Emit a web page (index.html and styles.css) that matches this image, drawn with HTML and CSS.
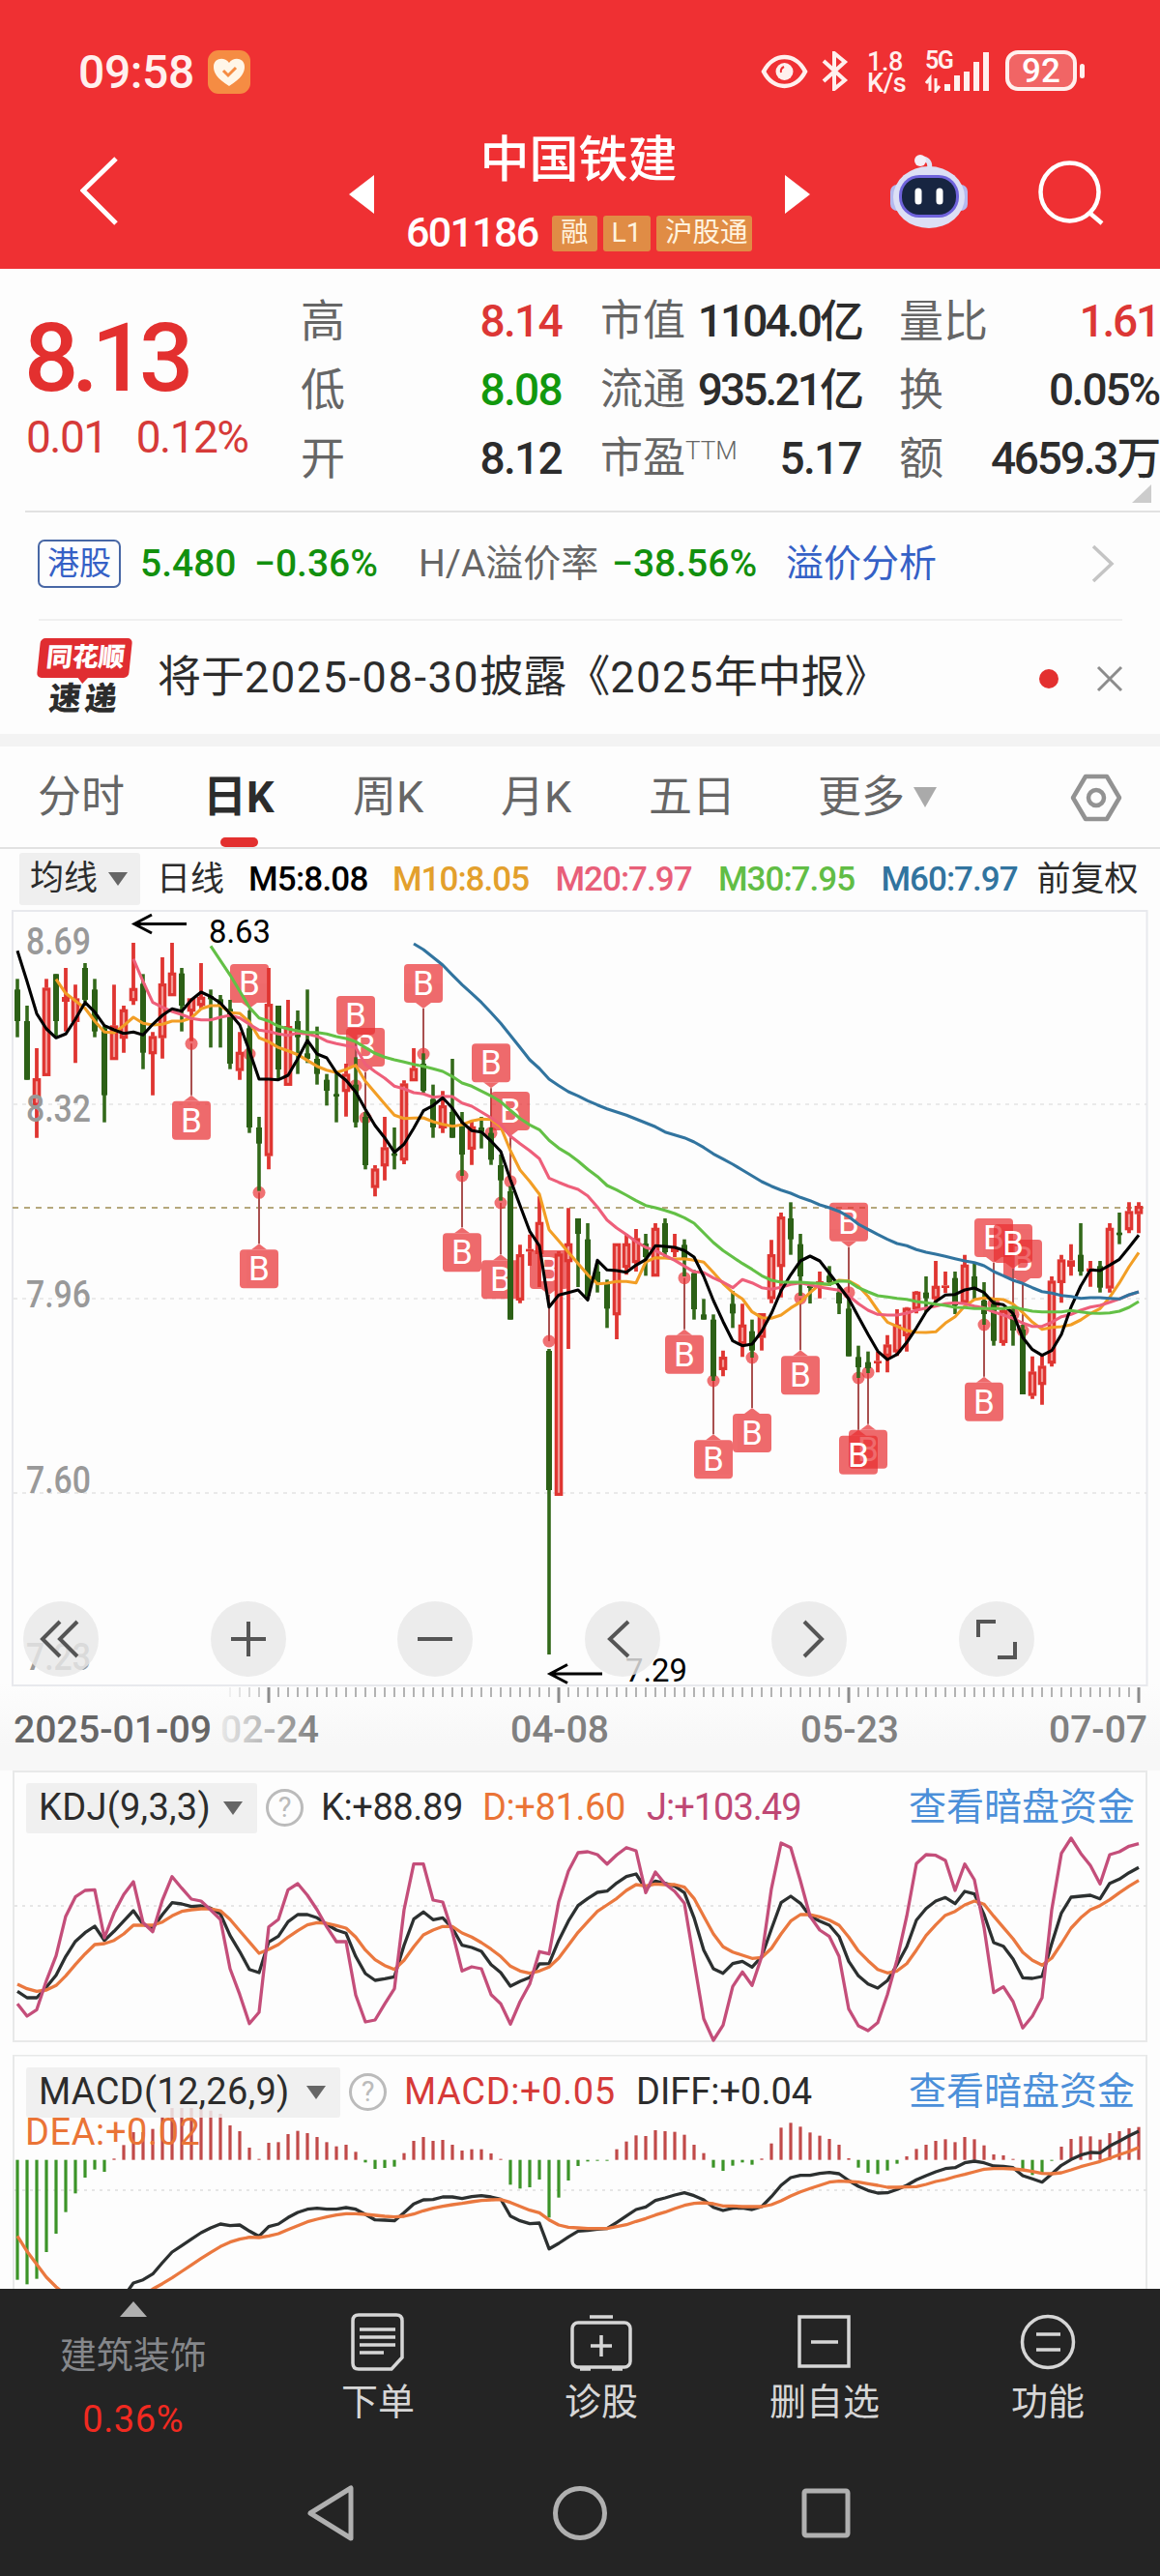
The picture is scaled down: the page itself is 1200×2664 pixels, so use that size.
FILE: index.html
```html
<!DOCTYPE html>
<html lang="zh-CN">
<head>
<meta charset="utf-8">
<title>中国铁建 601186</title>
<link rel="stylesheet" href="styles.css">
</head>
<body>
<header class="top">
  <div class="status">
    <span class="clock">09:58</span>
    <svg class="heart" width="44" height="45" viewBox="0 0 44 45"><rect width="44" height="45" rx="11" fill="#f58c43"/><path d="M22 37C9 29 6 23 6 17c0-9 11-11 16-4 5-7 16-5 16 4 0 6-3 12-16 20z" fill="#fff6e8"/><path d="M16 21l5 5 8-8" fill="none" stroke="#f58c43" stroke-width="3"/></svg>
    <svg class="eye" width="49" height="36" viewBox="0 0 49 36"><path d="M3 18C13-2 36-2 46 18 36 38 13 38 3 18z" fill="none" stroke="#fff0ee" stroke-width="4.5"/><circle cx="24.500" cy="18" r="9" fill="#fff0ee"/><path d="M24 13q-4 2-3 6" fill="none" stroke="#ef3033" stroke-width="2"/></svg>
    <svg class="bt" width="28" height="41" viewBox="0 0 28 41"><path d="M2 10l22 20-11 9V2l11 9L2 31" fill="none" stroke="#fff0ee" stroke-width="4"/></svg>
    <span class="net"><span>1.8</span><span>K/s</span></span>
    <span class="cell"><span class="fiveg">5G</span>
    <svg width="68" height="44" viewBox="0 0 68 44"><path d="M5 42V29l-4 5M11 29v13l4-5" fill="none" stroke="#fff0ee" stroke-width="3"/><path d="M23 42V35M33 42V26M43 42V22M53 42V12M63 42V2" stroke="#fff0ee" stroke-width="6"/></svg></span>
    <span class="battery">92</span><i class="knob"></i>
  </div>
  <div class="titlebar">
    <svg class="back" width="40" height="72" viewBox="0 0 40 72"><path d="M37 2L3 35l34 34" fill="none" stroke="#fff" stroke-width="5"/></svg>
    <svg class="prev" width="26" height="40" viewBox="0 0 26 40"><path d="M26 0v40L0 20z" fill="#fff"/></svg>
    <div class="name">
      <h1>中国铁建</h1>
      <div class="codeline"><span class="code">601186</span><b>融</b><b class="l1">L1</b><b>沪股通</b></div>
    </div>
    <svg class="next" width="26" height="40" viewBox="0 0 26 40"><path d="M0 0v40l26-20z" fill="#fff"/></svg>
    <svg class="robot" width="80" height="76" viewBox="0 0 80 76"><path d="M40 16q3-10-6-12" fill="none" stroke="#dfe2f5" stroke-width="5"/><circle cx="31" cy="6" r="6" fill="#f5eef8"/><rect x="0" y="31" width="14" height="27" rx="7" fill="#b4b9ee"/><rect x="66" y="31" width="14" height="27" rx="7" fill="#b4b9ee"/><ellipse cx="40" cy="44" rx="37" ry="32" fill="#dcdff5"/><rect x="9" y="21" width="62" height="44" rx="21" fill="#6f63dc"/><rect x="12" y="24" width="56" height="38" rx="18" fill="#172541"/><path d="M29 38v10M51 38v10" stroke="#fff" stroke-width="7" stroke-linecap="round"/></svg>
    <svg class="search" width="68" height="68" viewBox="0 0 68 68"><circle cx="32.500" cy="32.500" r="30" fill="none" stroke="#fff" stroke-width="4.500"/><path d="M53 54l13 11" stroke="#fff" stroke-width="4.500"/></svg>
  </div>
</header>

<section class="quote">
  <div class="last"><strong>8.13</strong><span class="chg"><span>0.01</span><span>0.12%</span></span></div>
  <dl class="c1"><div><dt>高</dt><dd class="up">8.14</dd></div><div><dt>低</dt><dd class="down">8.08</dd></div><div><dt>开</dt><dd>8.12</dd></div></dl>
  <dl class="c2"><div><dt>市值</dt><dd>1104.0亿</dd></div><div><dt>流通</dt><dd>935.21亿</dd></div><div><dt>市盈<sup>TTM</sup></dt><dd>5.17</dd></div></dl>
  <dl class="c3"><div><dt>量比</dt><dd class="up">1.61</dd></div><div><dt>换</dt><dd>0.05%</dd></div><div><dt>额</dt><dd>4659.3万</dd></div></dl>
  <i class="corner"></i>
</section>

<section class="hk">
  <span class="hkbadge">港股</span><span class="hkprice">5.480</span><span class="hkchg">−0.36%</span>
  <span class="halabel">H/A溢价率</span><span class="harate">−38.56%</span><span class="halink">溢价分析</span>
  <svg class="chev" width="24" height="40" viewBox="0 0 24 40"><path d="M2 2l19 18L2 38" fill="none" stroke="#c4c4c4" stroke-width="3.500"/></svg>
</section>

<section class="news">
  <div class="brand"><span class="brandtop">同花顺</span><span class="brandbot">速递</span></div>
  <span class="headline">将于<span class="num">2025-08-30</span>披露《<span class="num">2025</span>年中报》</span>
  <i class="dot"></i>
  <svg class="close" width="28" height="28" viewBox="0 0 28 28"><path d="M2 2l24 24M26 2L2 26" stroke="#8c8c8c" stroke-width="3"/></svg>
</section>
<div class="band"></div>

<nav class="tabs">
  <span>分时</span><span class="on">日K</span><span>周K</span><span>月K</span><span>五日</span><span class="more">更多<i></i></span>
  <svg width="54" height="50" viewBox="0 0 54 50"><path d="M16 3h22l13 22-13 22H16L3 25z" fill="none" stroke="#929292" stroke-width="4.500" stroke-linejoin="round"/><circle cx="27" cy="25" r="8" fill="none" stroke="#929292" stroke-width="4.500"/></svg>
</nav>

<div class="mabar">
  <span class="pick">均线<i></i></span><span class="day">日线</span>
  <span class="m5">M5:8.08</span><span class="m10">M10:8.05</span><span class="m20">M20:7.97</span><span class="m30">M30:7.95</span><span class="m60">M60:7.97</span>
  <span class="adj">前复权</span>
</div>

<div class="kchart">
  <svg id="kline" width="1200" height="895" viewBox="0 936 1200 895"></svg>
  <div class="tools">
    <svg viewBox="0 0 78 78"><path d="M38 21L20 39l18 18M56 21L38 39l18 18"/></svg>
    <svg viewBox="0 0 78 78"><path d="M39 21v36M21 39h36"/></svg>
    <svg viewBox="0 0 78 78"><path d="M21 39h36"/></svg>
    <svg viewBox="0 0 78 78"><path d="M45 21L26 39l19 18"/></svg>
    <svg viewBox="0 0 78 78"><path d="M34 21l18 18-18 18"/></svg>
    <svg viewBox="0 0 78 78"><path d="M20 37V21h18M58 42v16H40"/></svg>
  </div>
</div>

<section class="panel kdj">
  <svg id="kdj" width="1200" height="294" viewBox="0 1831 1200 294"></svg>
  <div class="legend"><span class="pick">KDJ(9,3,3)<i></i></span><em>?</em><span class="k">K:+88.89</span><span class="d">D:+81.60</span><span class="j">J:+103.49</span><a>查看暗盘资金</a></div>
</section>
<section class="panel macd">
  <svg id="macd" width="1200" height="245" viewBox="0 2125 1200 245"></svg>
  <div class="legend"><span class="pick">MACD(12,26,9)<i></i></span><em>?</em><span class="m">MACD:+0.05</span><span class="f">DIFF:+0.04</span><a>查看暗盘资金</a></div>
  <div class="dea">DEA:+0.02</div>
</section>

<footer>
  <div class="actions">
    <div class="sector"><i></i><span>建筑装饰</span><b>0.36%</b></div>
    <div><svg width="60" height="60" viewBox="0 0 60 60"><path d="M10 2h39q6 0 6 6v38L44 58H10q-6 0-6-6V8q0-6 6-6z"/><path d="M11 17h37M11 25h37M11 33h37M11 41h25"/></svg><span>下单</span></div>
    <div><svg width="66" height="60" viewBox="0 0 66 60"><rect x="3" y="10" width="60" height="46" rx="6"/><path d="M21 4h24M33 23v22M22 34h22M11 58h11M44 58h11"/></svg><span>诊股</span></div>
    <div><svg width="60" height="60" viewBox="0 0 60 60"><path d="M4 4h51v51H4zM16 30h28"/></svg><span>删自选</span></div>
    <div><svg width="60" height="60" viewBox="0 0 60 60"><circle cx="30" cy="30" r="26.500"/><path d="M18 22h25M18 38h25"/></svg><span>功能</span></div>
  </div>
  <div class="sysnav">
    <svg width="52" height="60" viewBox="0 0 52 60"><path d="M46 4v52L4 30z" stroke-linejoin="round"/></svg>
    <svg width="58" height="60" viewBox="0 0 58 60"><circle cx="29" cy="30" r="25.500"/></svg>
    <svg width="52" height="60" viewBox="0 0 52 60"><rect x="3" y="7" width="45" height="46" rx="2"/></svg>
  </div>
</footer>
<script src="charts.js"></script>
</body>
</html>
```
FILE: styles.css
```css
* { box-sizing: border-box; }
body { margin: 0; width: 1200px; background: #fdfdfd; color: #2c2c2c; font-family: Roboto, "Noto Sans CJK SC", sans-serif; font-stretch: 88%; white-space: nowrap; overflow-x: hidden; }
i, em { font-style: normal; }
svg { display: block; flex: none; }

.top { height: 278px; background: #ef3033; color: #fff; }
.status { height: 140px; padding: 52px 0 0 81px; display: flex; align-items: flex-start; }
.clock { font-size: 48px; line-height: 46px; width: 134px; font-weight: 500; letter-spacing: -.4px; color: #fff0ee; }
.heart { margin-right: 528px; }
.eye { margin: 4px 14px 0 0; }
.bt { margin: 1px 19px 0 0; }
.net { display: flex; flex-direction: column; width: 60px; padding-top: 1px; font-size: 27px; line-height: 22px; font-weight: 500; letter-spacing: -.4px; color: #fff0ee; }
.cell { position: relative; margin-right: 15px; }
.fiveg { position: absolute; left: 0; top: 0; font-size: 25px; line-height: 22px; font-weight: 600; letter-spacing: -1.500px; color: #fff0ee; }
.battery { width: 74px; height: 42px; border: 4px solid #fff0ee; border-radius: 13px; background: #f16565; font-size: 35px; line-height: 35px; font-weight: 500; text-align: center; }
.knob { width: 5px; height: 15px; margin: 14px 0 0 3px; border-radius: 3px; background: #fff0ee; }
.titlebar { height: 138px; display: flex; padding-left: 83px; }
.back { margin: 22px 238px 0 0; }
.prev, .next { margin-top: 41px; }
.name { width: 425px; }
.name h1 { margin: -3px 0 0; padding-right: 2px; text-align: center; font-size: 51px; line-height: 58px; font-weight: 500; }
.codeline { display: flex; padding: 28px 0 0 33px; gap: 6px; }
.code { font-size: 43px; line-height: 35px; width: 145px; letter-spacing: -1.700px; font-weight: 500; }
.codeline b { height: 37px; line-height: 36px; border-radius: 3px; background: #e08c45; padding: 0 9px; font-size: 28.500px; font-weight: 400; color: #fff3df; }
.codeline b:last-child { padding: 0 5px 0 9px; }
.robot { margin: 20px 73px 0 83px; }
.search { margin-top: 26px; }

.quote { position: relative; height: 252px; padding-left: 28px; display: flex; }
.quote::after { content: ""; position: absolute; left: 26px; right: 0; bottom: 0; height: 2px; background: #e2e2e2; }
.last { width: 283px; color: #e3302f; }
.last strong { display: block; margin: 40px 0 0 -3px; font-size: 99px; line-height: 104px; font-weight: 500; letter-spacing: -7px; }
.chg { display: flex; gap: 30px; margin: 7px 0 0 -1px; font-size: 46px; line-height: 46px; letter-spacing: -1.500px; color: #d63a38; }
dl { margin: 18px 0 0; }
dl > div { height: 71px; display: flex; align-items: center; justify-content: space-between; }
dt { font-size: 46px; line-height: 60px; color: #666; font-weight: 400; }
dd { margin: 0; font-size: 46px; line-height: 60px; font-weight: 500; text-align: right; letter-spacing: -1.700px; }
.c1 { width: 270px; margin-right: 40px; }
.c2 { width: 270px; margin-right: 39px; }
.c2 dd { letter-spacing: -2.900px; }
.c2 div:last-child dd { letter-spacing: -1.700px; }
.c3 { width: 269px; }
.c3 dd { font-weight: 500; letter-spacing: -2.200px; }
sup { font-size: 26px; line-height: 0; vertical-align: 14px; font-weight: 300; }
.c2 dt { font-size: 44px; }
.up { color: #dc3735; }
.down { color: #12980e; }
.corner { position: absolute; right: 9px; bottom: 10px; border: solid transparent; border-width: 0 0 19px 20px; border-bottom-color: #ccc; }

.hk { position: relative; height: 112px; padding: 28px 0 0 39px; display: flex; align-items: flex-start; }
.hk::after { content: ""; position: absolute; left: 40px; right: 39px; bottom: 0; height: 2px; background: #f0f0f0; }
.hk span { line-height: 50px; font-size: 39px; }
.hk .hkbadge { width: 86px; height: 50px; line-height: 45px; font-size: 33px; border: 2px solid #4867a5; border-radius: 7px; text-align: center; color: #3561c6; margin-right: 20px; }
.hkprice { width: 118px; } .hkchg { width: 170px; } .hkprice, .hkchg, .harate { color: #12900e; font-weight: 500; }
.halabel { width: 200px; color: #666; }
.harate { width: 180px; } .halink { color: #3561c6; width: 316px; }
.chev { margin-top: 5px; }

.news { height: 117px; display: flex; padding: 18px 0 0 40px; }
.brand { width: 123px; font-weight: 900; line-height: 1; }
.brandtop { display: block; position: relative; width: 95px; height: 41px; padding: 7px 0 0 8px; background: #e02d31; color: #fff; font-size: 27px; border-radius: 5px; transform: skewX(-6deg); }
.brandtop::after { content: ""; position: absolute; left: 42px; top: 40px; border: solid transparent; border-width: 7px 6px 0; border-top-color: #e02d31; }
.brandbot { display: block; margin: 5px 0 0 11px; font-size: 33px; letter-spacing: 4px; transform: skewX(-6deg); transform-origin: left; }
.headline { width: 912px; font-size: 45px; line-height: 82px; }
.num { letter-spacing: 1.600px; }
.dot { width: 20px; height: 20px; margin: 32px 39px 0 0; border-radius: 50%; background: #e3302f; }
.close { margin-top: 28px; }
.band { height: 13px; background: #f3f3f3; }

.tabs { height: 106px; border-bottom: 2px solid #e2e2e2; display: flex; padding-left: 39px; font-size: 45px; line-height: 106px; color: #666; }
.tabs span:nth-child(1) { width: 171px; }
.tabs span:nth-child(2) { width: 155px; }
.tabs span:nth-child(3) { width: 153px; }
.tabs span:nth-child(4) { width: 153px; }
.tabs span:nth-child(5) { width: 175px; }
.tabs .on { position: relative; color: #2c2c2c; font-weight: 700; }
.on::after { content: ""; position: absolute; left: 18px; bottom: 0; width: 39px; height: 10px; border-radius: 5px; background: #e3302f; }
.tabs .more { display: flex; width: 261px; }
.more i { margin: 42px 0 0 9px; border: solid transparent; border-width: 21px 12px 0; border-top-color: #aaa; height: 0; }
.tabs svg { margin-top: 28px; }

.mabar { height: 58px; display: flex; padding: 4px 0 0 20px; font-size: 35px; line-height: 56px; }
.pick { display: flex; align-items: center; background: #efefef; border-radius: 3px; }
.pick i { border: solid transparent; border-width: 14px 10px 0; border-top-color: #666; }
.mabar .pick { width: 125px; padding-left: 11px; gap: 11px; margin-right: 17px; }
.day { width: 95px; }
.m5, .m10, .m20, .m30, .m60 { font-weight: 500; letter-spacing: -1px; }
.m5 { width: 149px; color: #000; letter-spacing: -.8px; } .m10, .m20, .m30 { width: 168.500px; } .m10 { color: #e3a02c; } .m20 { color: #e85f79; } .m30 { color: #61bd45; } .m60 { width: 161px; color: #31749f; }

.kchart { position: relative; height: 895px; background: linear-gradient(#fdfdfd 805px, #f7f7f7 870px); }
.tools { position: absolute; left: 24px; top: 720px; display: flex; gap: 115.500px; }
.tools svg { width: 78px; height: 78px; border-radius: 50%; background: rgba(232,232,232,.82); fill: none; stroke: #555; stroke-width: 4px; }
svg text { font-family: Roboto, "Noto Sans CJK SC", sans-serif; }

.panel { position: relative; }
.kdj { height: 294px; }
.macd { height: 242px; overflow: hidden; }
.legend { position: absolute; left: 27px; top: 12px; width: 1147px; display: flex; font-size: 38px; line-height: 53px; align-items: center; }
.legend .pick { height: 52px; padding-left: 13px; background: rgba(237,237,237,.85); justify-content: space-between; padding-right: 15px; width: 239px; margin-right: 9px; letter-spacing: .3px; }
.macd .legend .pick { width: 325px; }
.legend em { width: 39px; height: 39px; border: 3px solid #bbb; border-radius: 50%; font-size: 29px; line-height: 33px; text-align: center; color: #bbb; margin-right: 18px; }
.k, .d, .j { letter-spacing: -.4px; }
.k { width: 167px; } .d { width: 170px; color: #ea7436; } .j { color: #bf4874; letter-spacing: -1px; } .m { width: 240px; color: #d63a38; letter-spacing: .6px; }
.legend a { margin-left: auto; font-size: 39px; color: #4b8fd9; }
.dea { position: absolute; left: 26px; top: 57px; font-size: 38px; line-height: 46px; letter-spacing: .6px; color: #ea7436; }

footer { height: 297px; background: #242424; color: #d6d6d6; }
.actions { display: flex; height: 165px; padding-top: 24px; }
.actions > div { width: 231px; display: flex; flex-direction: column; align-items: center; font-size: 38px; line-height: 48px; }
.actions > div > span { margin-top: 8px; }
.actions svg { fill: none; stroke: #d6d6d6; stroke-width: 3.500px; height: 60px; margin-top: 1px; }
.actions .sector { width: 275.500px; margin-top: -11px; }
.sector i { border: solid transparent; border-width: 0 14px 16px; border-bottom-color: #b0b0b0; }
.actions .sector span { color: #85878b; margin-top: 16px; }
.sector b { color: #f12a21; font-weight: 400; margin-top: 18px; letter-spacing: .6px; }
.sysnav { display: flex; padding: 37px 0 0 317px; }
.sysnav svg { fill: none; stroke: #b0b0b0; stroke-width: 5px; }
.sysnav svg:nth-child(1) { margin-right: 201.500px; }
.sysnav svg:nth-child(2) { margin-right: 200px; }
```
FILE: charts.js
```javascript
// Candle rows: direction, high, body top, body bottom, low (thirds of a pixel below y = 930).
const candles = `G 247 280 378 428|G 330 378 560 560|R 462 556 640 740|R 247 275 548 548|G 232 232 378 425|R 213 303 318 410|R 265 308 380 508|G 198 213 312 318|G 247 280 410 428|G 390 400 608 692
R 265 392 498 498|R 330 342 432 476|R 135 276 315 328|G 232 262 476 527|R 412 425 480 608|R 180 262 430 494|R 135 228 300 300|G 213 230 330 410|R 308 308 348 440|R 198 303 330 340
G 280 300 310 460|G 297 310 330 460|G 312 340 510 527|R 412 474 532 560|G 345 400 708 725|G 675 708 758 905|R 213 325 796 838|G 330 330 528 560|R 312 394 578 578|G 345 378 428 542
G 280 478 495 508|G 395 495 542 575|G 542 560 594 640|G 540 604 612 692|R 510 542 597 674|G 490 575 692 708|G 660 675 825 838|R 825 836 895 922|R 675 770 828 872|G 708 788 796 838
R 562 572 810 822|R 462 524 564 564|G 478 510 594 600|G 575 620 708 740|R 595 640 710 725|G 495 660 740 740|G 660 705 792 858|R 690 705 776 824|G 675 708 722 773|G 708 725 808 824
G 792 825 872 935|G 890 906 1304 1304|R 1072 1102 1244 1253|R 1040 1085 1093 1137|R 922 1002 1100 1203|G 1395 1401 1833 2343|R 1092 1100 1850 1850|R 958 1068 1125 1395|G 990 990 1038 1203|G 1005 1055 1230 1240
G 1130 1155 1188 1220|G 1180 1190 1270 1330|R 1068 1068 1290 1365|R 1038 1068 1143 1165|R 1023 1052 1128 1155|G 1038 1068 1110 1168|R 1005 1020 1170 1170|G 990 1005 1095 1110|R 1038 1080 1095 1110|G 1055 1072 1115 1170
G 1150 1160 1272 1304|G 1240 1288 1304 1304|G 1288 1304 1480 1494|R 1400 1420 1460 1480|G 1215 1255 1285 1330|R 1255 1320 1380 1420|G 1304 1340 1400 1422|R 1285 1285 1360 1400|R 1057 1102 1240 1253|R 972 985 1140 1235
G 940 990 1055 1103|G 1038 1070 1170 1230|G 1190 1200 1205 1254|R 1155 1185 1195 1238|G 1138 1168 1188 1200|G 1200 1220 1254 1287|G 1230 1270 1418 1418|G 1385 1420 1452 1485|G 1403 1436 1455 1470|R 1403 1432 1440 1468
R 1352 1382 1418 1468|R 1272 1320 1405 1417|R 1265 1268 1355 1403|R 1216 1218 1272 1285|G 1170 1220 1238 1280|R 1122 1200 1240 1250|R 1155 1198 1206 1222|G 1155 1175 1260 1287|R 1103 1134 1252 1255|G 1130 1170 1210 1240
G 1188 1245 1287 1320|G 1240 1255 1370 1385|R 1270 1275 1376 1385|G 1270 1290 1338 1385|G 1320 1335 1536 1536|R 1418 1466 1540 1550|R 1415 1448 1506 1568|R 1170 1184 1440 1450|R 1103 1118 1190 1252|R 1070 1120 1140 1168
G 1005 1103 1155 1168|R 1122 1145 1155 1202|G 1122 1138 1205 1220|R 1005 1020 1207 1220|G 972 1034 1042 1070|R 940 968 1026 1036|R 940 952 976 1036`
  .split(/[|\n]/).map(r => r.trim().split(' ')).map(r => [r[0], ...r.slice(1).map(Number)]);

const n = s => s.trim().split(/\s+/).map(Number);
const ma = [
  ['#f29e25', 4, n('248 292 315 338 378 412 414 392 366 385 390 388 378 378 368 340 330 330 352 354 380 430 442 460 470 482 500 518 530 538 528 515 565 600 635 670 680 679 678 690 698 704 700 688 682 683 706 780 840 875 915 1025 1060 1095 1130 1165 1193 1191 1186 1186 1190 1125 1112 1113 1116 1115 1120 1126 1158 1192 1220 1240 1280 1298 1300 1290 1268 1250 1220 1195 1195 1182 1184 1200 1232 1275 1312 1325 1338 1343 1344 1342 1315 1295 1262 1242 1237 1240 1242 1256 1282 1312 1334 1328 1326 1320 1305 1285 1270 1235 1190 1140 1096')],
  ['#ee5f7a', 12, n('185 255 320 335 348 358 370 374 374 366 360 368 388 406 410 418 422 415 418 425 440 448 454 460 512 535 555 580 588 600 604 614 611 612 632 642 660 678 700 735 758 780 805 865 878 890 900 920 955 995 1020 1040 1062 1080 1090 1105 1120 1138 1156 1158 1175 1188 1205 1180 1190 1205 1210 1204 1195 1190 1196 1203 1208 1213 1230 1255 1275 1288 1290 1290 1284 1275 1268 1262 1255 1252 1255 1262 1268 1280 1290 1300 1315 1325 1325 1312 1295 1288 1275 1265 1260 1250 1240 1228 1218')],
  ['#000', 0, n('160 255 355 402 430 418 372 320 350 392 405 416 412 421 388 360 340 347 312 288 302 322 355 390 470 558 558 560 546 495 438 480 492 538 562 598 652 702 740 785 760 710 656 640 616 648 692 718 722 750 782 870 950 1030 1075 1265 1228 1220 1212 1243 1120 1150 1152 1157 1135 1118 1075 1077 1080 1090 1110 1170 1245 1310 1370 1385 1380 1340 1285 1215 1165 1122 1107 1122 1160 1200 1240 1295 1350 1402 1428 1412 1375 1330 1280 1248 1228 1226 1212 1206 1220 1253 1258 1285 1360 1397 1415 1400 1350 1265 1200 1150 1152 1135 1117 1080 1042')],
  ['#63c046', 20, n('145 190 235 285 335 368 378 394 402 408 413 413 418 426 432 442 460 478 490 498 505 512 518 526 534 550 570 580 595 610 628 655 680 700 715 748 772 790 812 838 860 888 902 918 935 950 957 965 975 988 1005 1035 1065 1090 1110 1130 1148 1168 1182 1188 1188 1188 1190 1192 1195 1184 1186 1205 1218 1230 1234 1238 1241 1248 1252 1256 1260 1266 1267 1270 1270 1270 1270 1265 1272 1278 1280 1280 1280 1276 1280 1284 1285 1283 1278 1266 1248')],
  ['#31749f', 41, n('138 156 180 204 235 265 292 320 352 385 422 460 498 525 558 578 597 610 625 638 650 660 670 682 694 706 722 731 740 753 770 790 806 822 840 858 876 890 902 912 925 935 948 957 968 985 1008 1024 1040 1055 1068 1075 1087 1095 1101 1108 1115 1122 1127 1137 1155 1168 1182 1192 1205 1217 1222 1229 1232 1238 1236 1236 1238 1240 1227 1218')]
];
// Buy marks: candle index, anchor point, label centre.
const marks = [[18,448,686],[24,480,261],[25,910,1147],[36,678,459],[35,578,360],[42,480,261],[46,858,1096],[49,725,508],[50,942,1180],[51,875,657],[55,1371,1149],[69,1175,1412],[72,1494,1738],[76,1422,1656],[81,1238,1477],[86,1220,1001],[88,1468,1706],[87,1485,1724],[100,1320,1559],[101,1255,1050],[104,1338,1116],[103,1288,1068]];

const X = i => 18 + 10 * i;
const line = (data, start, base, color, w = 3.1) =>
  `<polyline fill="none" stroke="${color}" stroke-width="${w}" stroke-linejoin="round" points="${data.map((v, k) => X(start + k) + ',' + (base + v / 3).toFixed(1)).join(' ')}"/>`;
const label = (t, x, y, w, size, fill, weight = 400) =>
  `<text x="${x}" y="${y}" font-size="${size}" fill="${fill}" font-weight="${weight}" textLength="${w}" lengthAdjust="spacingAndGlyphs">${t}</text>`;

function kline() {
  let s = '<defs><linearGradient id="fade" gradientUnits="userSpaceOnUse" x1="225" x2="335" y1="0" y2="0"><stop offset="0" stop-color="#777" stop-opacity=".1"/><stop offset="1" stop-color="#777"/></linearGradient></defs>';
  s += '<rect x="13" y="942" width="1173.500" height="801" fill="none" stroke="#e8e9ed" stroke-width="2"/>';
  for (const y of [1142, 1343, 1544]) s += `<path d="M14 ${y}H1186" stroke="#e4e4e4" stroke-width="1.500" stroke-dasharray="4 5"/>`;
  s += '<path d="M13 1249H1186" stroke="#b5a87c" stroke-width="2" stroke-dasharray="6 6"/>';
  for (const [i, dot, c] of marks) {
    const x = X(i), y = 930 + c / 3, d = 930 + dot / 3, up = d < y ? -1 : 1, e = y + up * 20;
    s += `<path d="M${x} ${d}V${e + up * 6}" stroke="#a9504f" stroke-width="2"/><circle cx="${x}" cy="${d}" r="6.500" fill="#ea3538" opacity=".7"/>`;
    s += `<g fill="#e92d30" opacity=".7"><rect x="${x - 20}" y="${y - 20}" width="40" height="40" rx="4"/><path d="M${x - 8} ${e}L${x} ${e + up * 6}L${x + 8} ${e}z"/></g>`;
    s += `<text x="${x}" y="${y + 12}" font-size="35" fill="#fff" text-anchor="middle">B</text>`;
  }
  candles.forEach(([c, h, t, b, l], i) => {
    const x = X(i), y = v => 930 + v / 3, bh = Math.max((b - t) / 3, 2);
    if (c === 'G') s += `<path d="M${x} ${y(h)}V${y(l)}" stroke="#33691a" stroke-width="3.600"/><rect x="${x - 3}" y="${y(t)}" width="6" height="${bh}" fill="#2c6016"/>`;
    else {
      s += `<path d="M${x} ${y(h)}V${y(t)}M${x} ${y(b)}V${y(l)}" stroke="#df3531" stroke-width="3.800"/>`;
      s += bh < 7 ? `<rect x="${x - 4}" y="${y(t)}" width="8" height="${bh}" fill="#df3531"/>`
        : `<rect x="${x - 2.7}" y="${y(t) + 1.300}" width="5.400" height="${bh - 2.600}" fill="#f19a96" stroke="#df3531" stroke-width="3.200"/>`;
    }
  });
  for (const [c, i, d] of ma) s += line(d, i, 930, c);
  const g = '#999';
  s += label('8.69', 27, 987, 67, 39, g, 500) + label('8.32', 27, 1160, 67, 39, g, 500) + label('7.96', 27, 1352, 67, 39, g, 500) + label('7.60', 27, 1544, 67, 39, g, 500) + label('7.23', 27, 1727, 67, 39, '#999', 500);
  s += label('8.63', 216, 975, 64, 34, '#000') + label('7.29', 647, 1739, 64, 34, '#000');
  s += '<path d="M193 955.500H140M157 946L139 955.500L157 965M623 1731H570M587 1721.500L569 1731L587 1740.500" fill="none" stroke="#000" stroke-width="3"/>';
  for (let x = 238; x <= 1178; x += 10) {
    const major = (x - 278) % 300 === 0;
    s += `<path d="M${x} 1745V${major ? 1761 : 1755}" stroke="#8b8b8b" stroke-width="${major ? 3 : 1.300}" opacity="${x < 278 ? (x - 228) / 60 : 1}"/>`;
  }
  s += label('2025-01-09', 14, 1802, 205, 38, '#666', 500) + label('02-24', 228, 1802, 102, 38, 'url(#fade)', 500) + label('04-08', 528, 1802, 102, 38, '#808080', 500) + label('05-23', 828, 1802, 102, 38, '#808080', 500) + label('07-07', 1085, 1802, 102, 38, '#808080', 500);
  document.getElementById('kline').innerHTML = s;
}

const K = n('718 738 738 705 668 610 563 536 516 560 532 500 468 510 522 480 443 447 455 453 460 478 545 595 650 660 565 547 502 480 480 490 510 528 538 610 663 684 679 673 575 494 472 496 490 522 575 582 594 635 660 702 687 675 633 632 560 500 452 430 411 407 382 362 354 400 376 383 392 412 490 590 648 662 632 625 643 610 525 443 423 445 485 500 513 548 625 670 695 708 685 635 580 497 461 438 427 446 408 416 480 567 578 618 676 678 672 570 475 426 423 420 431 383 370 350 334');
const D = n('696 710 718 714 700 670 635 602 573 570 560 540 513 513 513 503 484 470 465 462 462 468 495 530 565 600 588 573 550 530 512 505 507 514 522 550 590 620 638 650 622 580 543 528 517 517 537 550 567 587 610 640 655 662 655 643 615 575 535 502 470 450 430 405 387 391 385 387 387 395 430 485 540 580 596 606 616 613 585 540 500 480 480 487 497 513 550 593 623 650 661 655 632 590 545 512 482 470 450 438 448 485 520 555 597 622 637 615 570 522 490 465 452 434 412 392 374');
const J = n('757 795 775 685 608 485 425 405 403 552 475 418 378 505 533 435 362 398 432 438 466 495 648 728 818 783 518 495 403 384 420 465 518 564 564 730 813 807 757 710 465 323 323 435 441 535 655 642 648 728 757 820 750 695 595 602 440 345 288 285 294 323 295 272 282 412 348 385 408 445 625 803 870 823 703 658 700 610 400 258 272 375 485 528 548 610 773 825 840 815 728 620 485 322 294 296 312 405 323 372 520 722 704 750 832 795 738 465 290 243 290 328 385 294 285 268 260');
const bars = n('713 727 710 627 570 503 445 396 371 378 337 295 255 255 245 208 180 180 180 180 188 198 234 252 303 338 288 286 261 251 258 270 286 299 294 316 349 369 366 362 320 282 270 282 279 294 312 308 308 321 338 418 430 426 402 520 458 405 360 346 343 343 308 284 265 267 249 252 254 263 294 320 365 375 359 349 356 337 290 241 226 238 256 266 276 294 336 365 381 385 374 353 330 307 294 282 277 286 270 277 296 324 327 338 372 388 385 343 300 276 268 268 278 258 252 243 239');
const diff = n('765 723 713 695 660 627 607 587 567 552 540 545 543 562 578 548 540 520 504 494 491 494 494 489 494 510 527 528 530 505 478 465 464 456 456 461 455 452 456 463 515 530 539 537 617 600 580 562 560 556 554 535 515 495 487 467 459 450 443 452 465 488 498 491 490 495 486 455 420 396 389 389 383 380 384 405 423 436 444 443 433 420 403 390 378 368 365 350 345 350 360 361 365 390 400 410 385 358 340 326 318 319 298 283 266 252');
const dea = n('577 625 665 705 735 760 780 790 790 790 785 780 775 760 742 725 707 687 667 647 628 610 596 587 581 582 577 570 557 545 533 525 518 512 508 508 510 513 516 518 516 509 499 491 485 480 476 471 467 465 464 473 485 497 505 527 543 550 552 554 554 554 548 542 532 523 512 503 492 482 476 474 477 484 484 486 486 486 480 468 453 440 430 420 410 407 408 410 415 420 426 426 425 424 417 408 402 393 386 378 370 368 368 369 372 377 383 384 381 372 362 354 346 336 325 315 302');

function kdj() {
  document.getElementById('kdj').innerHTML =
    '<rect x="14" y="1832" width="1172" height="279" fill="none" stroke="#e8e9e9" stroke-width="2"/><path d="M15 1971H1186" stroke="#dedede" stroke-width="1.300" stroke-dasharray="3 5"/>' +
    line(K, 0, 1820, '#2c3030', 3.3) + line(D, 0, 1820, '#ea783f', 3.3) + line(J, 0, 1820, '#c44e7a', 3.3);
}
function macd() {
  let s = '<path d="M14 2370V2125.500H1186V2370" fill="none" stroke="#e8e9e9" stroke-width="2"/><path d="M15 2265H1186" stroke="#dedede" stroke-width="1.300" stroke-dasharray="3 5"/>';
  bars.forEach((v, i) => {
    const a = Math.min(v, 341), h = Math.max(Math.abs(v - 341) / 3, 1);
    s += `<rect x="${X(i) - 1.6}" y="${2120 + a / 3}" width="3.200" height="${h}" fill="${v > 341 ? '#3c9428' : '#c14a49'}"/>`;
  });
  document.getElementById('macd').innerHTML = s + line(diff, 11, 2120, '#2c3030', 3.3) + line(dea, 0, 2120, '#ea783f', 3.3);
}
kline();
kdj();
macd();
```
